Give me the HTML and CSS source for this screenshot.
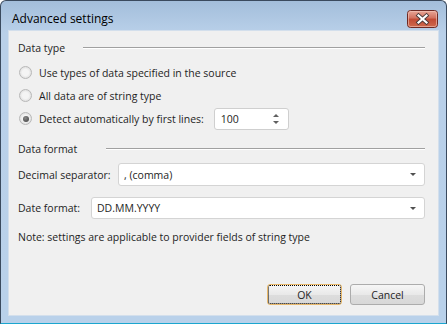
FILE: index.html
```html
<!DOCTYPE html>
<html lang="en">
<head>
    <meta charset="UTF-8">
    <title>Advanced settings</title>
    <link rel="stylesheet" href="styles.css">
</head>
<body>
    <div class="window">
        <div class="titlebar">
            <span class="caption">Advanced settings</span>
            <div class="close-btn">
                <svg width="31" height="18" viewBox="0 0 31 18">
                    <defs>
                        <linearGradient id="closeBg" x1="0" y1="0" x2="0" y2="1">
                            <stop offset="0" stop-color="#e9a99a"/>
                            <stop offset="0.45" stop-color="#d2705e"/>
                            <stop offset="0.5" stop-color="#c14a34"/>
                            <stop offset="1" stop-color="#cf6b4f"/>
                        </linearGradient>
                    </defs>
                    <rect x="0.5" y="0.5" width="30" height="17" rx="3" fill="url(#closeBg)" stroke="#6e2a24"/>
                    <rect x="1.5" y="1.5" width="28" height="15" rx="2" fill="none" stroke="#f4c8bc" stroke-opacity="0.6"/>
                    <path d="M11.5 5.5 L19.5 12.5 M19.5 5.5 L11.5 12.5" stroke="#4a3a3a" stroke-width="4" stroke-linecap="square"/>
                    <path d="M11.5 5.5 L19.5 12.5 M19.5 5.5 L11.5 12.5" stroke="#ffffff" stroke-width="2.2" stroke-linecap="square"/>
                </svg>
            </div>
        </div>
        <div class="frame">
            <div class="client">
                <div class="group-head">
                    <span class="head-title head-type">Data type</span>
                    <span class="head-line"></span>
                </div>
                <div class="radio-row">
                    <span class="radio"></span>
                    <span>Use types of data specified in the source</span>
                </div>
                <div class="radio-row">
                    <span class="radio"></span>
                    <span>All data are of string type</span>
                </div>
                <div class="radio-row">
                    <span class="radio checked"></span>
                    <span>Detect automatically by first lines:</span>
                    <div class="spin">
                        <span class="spin-value">100</span>
                        <span class="spin-arrows">
                            <span class="arr-up"></span>
                            <span class="arr-down"></span>
                        </span>
                    </div>
                </div>

                <div class="group-head head-second">
                    <span class="head-title head-format">Data format</span>
                    <span class="head-line"></span>
                </div>
                <div class="field-row">
                    <span class="field-label label-decimal">Decimal separator:</span>
                    <div class="combo">
                        <span>, (comma)</span>
                        <span class="combo-arrow"></span>
                    </div>
                </div>
                <div class="field-row row-date">
                    <span class="field-label label-date">Date format:</span>
                    <div class="combo">
                        <span>DD.MM.YYYY</span>
                        <span class="combo-arrow"></span>
                    </div>
                </div>
                <p class="note">Note: settings are applicable to provider fields of string type</p>

                <div class="buttons">
                    <button class="btn btn-default">OK</button>
                    <button class="btn">Cancel</button>
                </div>
            </div>
        </div>
    </div>
</body>
</html>
```

FILE: styles.css
```css
body {
    margin: 0;
    font-family: 'Open Sans', 'Noto Sans', sans-serif;
    font-size: 10.5px;
    color: #1e1e1e;
}
.window {
    width: 447px;
    height: 324px;
    box-sizing: border-box;
    border: 1px solid #3a4a5e;
    border-bottom-color: #1ba6cf;
    border-radius: 6px 6px 0 0;
    background: linear-gradient(#a3bedb, #b9d0e9 32px, #b9d1ea);
    display: flex;
    flex-direction: column;
}
.titlebar {
    height: 29px;
    display: flex;
    justify-content: space-between;
    padding: 0 8px 0 11px;
}
.caption {
    font-size: 12px;
    line-height: 17px;
    margin-top: 9px;
    color: #000;
}
.close-btn {
    margin-top: 9px;
    height: 18px;
}
.frame {
    flex: 1;
    padding: 0 7px 7px 7px;
    display: flex;
}
.client {
    flex: 1;
    background-color: #f0f0f0;
    border: 1px solid #d3dfec;
    padding: 7px 13px 10px 9px;
    display: flex;
    flex-direction: column;
}
.group-head {
    height: 20px;
    display: flex;
    align-items: center;
}
.head-second {
    margin-top: 9px;
}
.head-type {
    width: 65px;
}
.head-format {
    width: 88px;
}
.head-line {
    flex: 1;
    height: 0;
    border-top: 1px solid #a0a0a0;
    border-bottom: 1px solid #ffffff;
}
.group-head + .radio-row {
    margin-top: 3px;
}
.radio-row {
    height: 23px;
    display: flex;
    align-items: center;
}
.radio {
    width: 11px;
    height: 11px;
    margin: 0 7px 0 1px;
    border: 1px solid #b8b8b8;
    border-radius: 50%;
    background: radial-gradient(circle, #f4f4f4 40%, #e0e0e0 75%);
    display: flex;
    align-items: center;
    justify-content: center;
}
.radio.checked::after {
    content: "";
    width: 6px;
    height: 6px;
    border-radius: 50%;
    background: radial-gradient(circle at 40% 35%, #8a8a8a, #3c3c3c);
}
.spin {
    margin-left: 10px;
    width: 75px;
    height: 22px;
    box-sizing: border-box;
    background: #fff;
    border: 1px solid #cfcfcf;
    border-radius: 3px;
    display: flex;
    align-items: center;
    justify-content: space-between;
    padding: 0 9px 0 6px;
}
.spin-arrows {
    display: flex;
    flex-direction: column;
    gap: 4px;
}
.arr-up {
    width: 0;
    height: 0;
    border-left: 3px solid transparent;
    border-right: 3px solid transparent;
    border-bottom: 3px solid #606060;
}
.arr-down {
    width: 0;
    height: 0;
    border-left: 3px solid transparent;
    border-right: 3px solid transparent;
    border-top: 3px solid #606060;
}
.field-row {
    margin-top: 4px;
    height: 23px;
    display: flex;
    align-items: center;
}
.row-date {
    margin-top: 11px;
    height: 22px;
}
.label-decimal {
    width: 100px;
}
.label-date {
    width: 73px;
}
.combo {
    flex: 1;
    height: 100%;
    box-sizing: border-box;
    background: #fff;
    border: 1px solid #d4d4d4;
    border-radius: 3px;
    display: flex;
    align-items: center;
    justify-content: space-between;
    padding: 0 8px 0 5px;
}
.combo-arrow {
    width: 0;
    height: 0;
    border-left: 3px solid transparent;
    border-right: 3px solid transparent;
    border-top: 3px solid #505050;
}
.note {
    margin: 10px 0 0 0;
    line-height: 16px;
}
.buttons {
    margin-top: auto;
    display: flex;
    justify-content: flex-end;
    gap: 8px;
}
.btn {
    width: 75px;
    height: 21px;
    font-family: inherit;
    font-size: 10.5px;
    color: #1e1e1e;
    background: linear-gradient(#f6f6f6, #e9e9e9 50%, #dddddd 51%, #d8d8d8);
    border: 1px solid #acacac;
    border-radius: 3px;
    padding: 0;
}
.btn-default {
    border: 1px solid #e8b86a;
    outline: 1px dotted #000;
    outline-offset: -2px;
}
```
